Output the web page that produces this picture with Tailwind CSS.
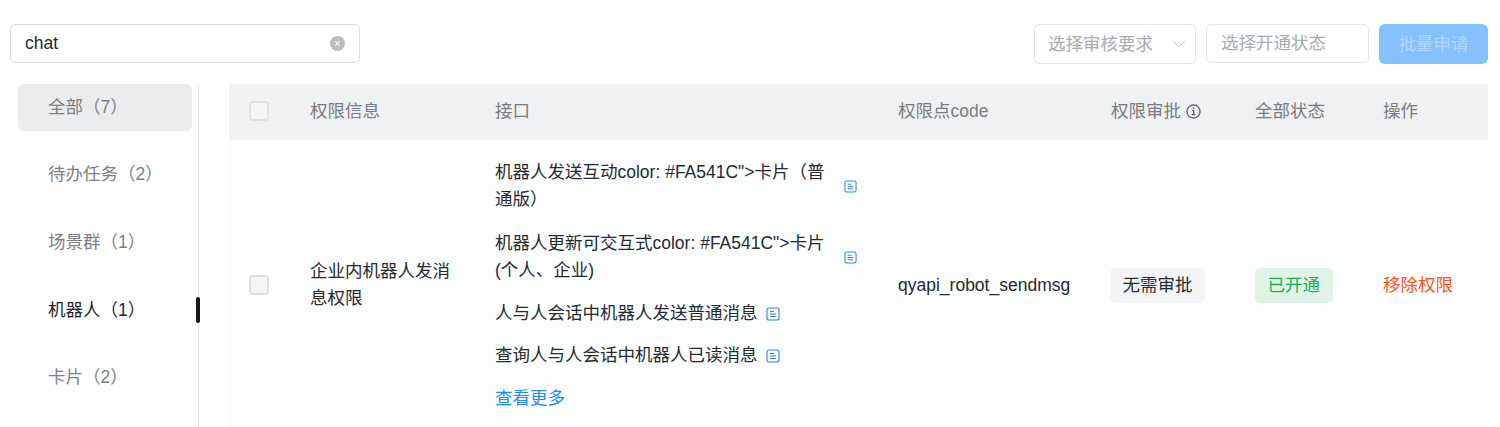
<!DOCTYPE html>
<html lang="zh-CN">
<head>
  <meta charset="UTF-8" />
  <title>权限管理</title>
  <script src="https://cdn.jsdelivr.net/npm/@tailwindcss/browser@4"></script>
</head>
<body class="h-[427px] overflow-hidden bg-white text-[17.5px] text-[#262a30] font-['Liberation_Sans','Noto_Sans_CJK_SC',sans-serif]">

  <!-- Filter bar -->
  <div class="flex items-start justify-between pt-6 pl-2.5 pr-3">
    <div class="flex h-[39px] w-[350px] items-center justify-between rounded-[5px] border border-[#dcdddf] pl-3.5 pr-[14px]">
      <span>chat</span>
      <svg class="w-[15px] h-[15px]" viewBox="0 0 15 15">
        <circle cx="7.5" cy="7.5" r="7.5" fill="#bdbdbd" />
        <path d="M5.3 5.3l4.4 4.4M9.7 5.3l-4.4 4.4" stroke="#fff" stroke-width="1.2" />
      </svg>
    </div>
    <div class="flex gap-2.5">
      <div class="flex h-10 w-[162px] items-center justify-between rounded-[5px] border border-[#e3e4e6] pl-[13px] pr-[9px] text-[#a9abaf]">
        <span>选择审核要求</span>
        <svg class="w-3.5 h-3.5" viewBox="0 0 14 14" fill="none"><path d="M1 4l6 6 6-6" stroke="#c4c6c9" stroke-width="1" /></svg>
      </div>
      <div class="flex h-[39px] w-[163px] items-center rounded-[5px] border border-[#e3e4e6] pl-3.5 text-[#a9abaf]">选择开通状态</div>
      <div class="flex h-10 w-[109px] items-center justify-center rounded-md bg-[#85c0ff] text-white/40">批量申请</div>
    </div>
  </div>

  <div class="flex mt-5 pl-[18px] pr-3">
    <!-- Sidebar -->
    <div class="flex h-[343px] w-[181px] flex-col gap-[20.5px] border-r border-[#e6e7e9] pr-1.5 text-[#7d7f83]">
      <div class="flex h-[47px] items-center rounded-md bg-[#ebecee] pl-[30px]">全部（7）</div>
      <div class="flex h-[47px] items-center pb-0.5 pl-[30px]">待办任务（2）</div>
      <div class="flex h-[47px] items-center pl-[30px]">场景群（1）</div>
      <div class="relative flex h-[47px] items-center pl-[30px] text-[#1f2329]">
        机器人（1）
        <span class="absolute -right-2 top-2.5 h-[26px] w-1 rounded-sm bg-[#15181c]"></span>
      </div>
      <div class="flex h-[47px] items-center pl-[30px]">卡片（2）</div>
    </div>

    <!-- Table -->
    <div class="ml-[30px] w-[1259px]">
      <div class="grid h-14 grid-cols-[81px_185px_403px_212px_145px_128px_105px] items-center bg-[#f0f1f3] pb-0.5 text-[#7a7c80]">
        <div class="pl-5"><div class="h-5 w-5 rounded-[4px] border-2 border-[#dfe0e2] bg-[#f5f5f6]"></div></div>
        <div>权限信息</div>
        <div>接口</div>
        <div>权限点code</div>
        <div class="flex items-center gap-[5px] pl-px">
          权限审批
          <svg class="w-[15px] h-[15px]" viewBox="0 0 15 15" fill="none" stroke="#55575b" stroke-width="1.2">
            <circle cx="7.5" cy="7.5" r="6.6" />
            <path d="M6 6.5h1.7v4M5.8 10.7h3.6" />
            <path d="M7.5 3.6v1.5" stroke-width="1.5" />
          </svg>
        </div>
        <div>全部状态</div>
        <div>操作</div>
      </div>

      <div class="grid h-[290px] grid-cols-[81px_185px_403px_212px_145px_128px_105px] items-center bg-[#fcfdfd]">
        <div class="pl-5"><div class="h-5 w-5 rounded-[4px] border-2 border-[#dfe0e2] bg-[#f5f5f6]"></div></div>
        <div class="w-[150px] leading-[27px]">企业内机器人发消息权限</div>
        <div class="self-start pt-[19px] leading-[27px]">
          <div class="mb-[17px] flex w-[362px] items-center justify-between">
            <span class="w-[335px]">机器人发送互动color: #FA541C"&gt;卡片（普通版）</span>
            <svg class="w-[13px] h-[13px]" viewBox="0 0 14 14" fill="none" stroke="#2f80ed" stroke-width="1.1"><rect x="1" y="1" width="12" height="12" rx="2" /><path d="M4 4.5h4M4 7h6M4 9.5h6" /></svg>
          </div>
          <div class="mb-[16px] flex w-[362px] items-center justify-between">
            <span class="w-[335px]">机器人更新可交互式color: #FA541C"&gt;卡片(个人、企业)</span>
            <svg class="w-[13px] h-[13px]" viewBox="0 0 14 14" fill="none" stroke="#2f80ed" stroke-width="1.1"><rect x="1" y="1" width="12" height="12" rx="2" /><path d="M4 4.5h4M4 7h6M4 9.5h6" /></svg>
          </div>
          <div class="mb-[15px] flex items-center gap-2">
            <span>人与人会话中机器人发送普通消息</span>
            <svg class="w-[14px] h-[14px]" viewBox="0 0 14 14" fill="none" stroke="#2f80ed" stroke-width="1.1"><rect x="1" y="1" width="12" height="12" rx="2" /><path d="M4 4.5h4M4 7h6M4 9.5h6" /></svg>
          </div>
          <div class="mb-4 flex items-center gap-2">
            <span>查询人与人会话中机器人已读消息</span>
            <svg class="w-[14px] h-[14px]" viewBox="0 0 14 14" fill="none" stroke="#2f80ed" stroke-width="1.1"><rect x="1" y="1" width="12" height="12" rx="2" /><path d="M4 4.5h4M4 7h6M4 9.5h6" /></svg>
          </div>
          <div class="text-[#1a8cff]">查看更多</div>
        </div>
        <div>qyapi_robot_sendmsg</div>
        <div><span class="inline-flex h-[35px] items-center rounded-[5px] bg-[#f3f4f5] px-[12.5px]">无需审批</span></div>
        <div><span class="inline-flex h-[35px] items-center rounded-[5px] bg-[#dff3e7] px-[12.5px] text-[#18b157]">已开通</span></div>
        <div class="text-[#fa541c]">移除权限</div>
      </div>
    </div>
  </div>

</body>
</html>
